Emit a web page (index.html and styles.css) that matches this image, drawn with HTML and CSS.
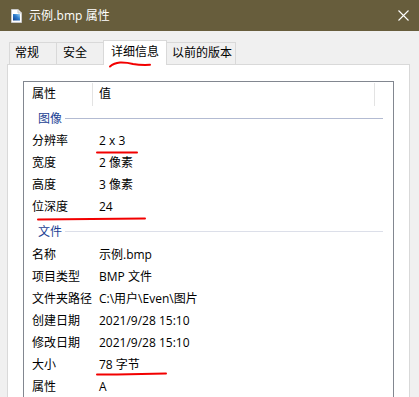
FILE: index.html
```html
<!DOCTYPE html>
<html lang="zh-CN">
<head>
<meta charset="utf-8">
<title>示例.bmp 属性</title>
<link rel="stylesheet" href="styles.css">
</head>
<body>
<div class="window">
  <div class="titlebar">
    <svg class="file-icon" width="11" height="14" viewBox="0 0 11 14">
      <defs>
        <linearGradient id="pic" x1="0" y1="1" x2="1" y2="0">
          <stop offset="0" stop-color="#123f8c"/>
          <stop offset="0.55" stop-color="#2f7fd0"/>
          <stop offset="1" stop-color="#9fd6f6"/>
        </linearGradient>
      </defs>
      <path d="M0.5 0.5 H7 L10.5 4 V13.5 H0.5 Z" fill="#ffffff" stroke="#c9c9c9"/>
      <path d="M7 0.5 V4 H10.5" fill="#eeeeee" stroke="#c9c9c9"/>
      <rect x="2" y="5" width="7" height="6.5" fill="url(#pic)"/>
    </svg>
    <span class="title">示例.bmp 属性</span>
    <svg class="close" width="11" height="11" viewBox="0 0 11 11">
      <path d="M0.5 0.5 L10.5 10.5 M10.5 0.5 L0.5 10.5" stroke="#ffffff" stroke-width="1.1" fill="none"/>
    </svg>
  </div>

  <div class="tabs">
    <div class="tab t-general">常规</div>
    <div class="tab t-security">安全</div>
    <div class="tab t-details active">详细信息</div>
    <div class="tab t-previous">以前的版本</div>
  </div>

  <div class="panel">
    <div class="list">
      <div class="header">
        <div class="hname">属性</div>
        <div class="sep"></div>
        <div class="hvalue">值</div>
        <div class="sep"></div>
      </div>

      <div class="group group-first"><span>图像</span><i class="rule rule-strong"></i></div>
      <div class="row"><div class="label">分辨率</div><div class="value">2 x 3</div></div>
      <div class="row"><div class="label">宽度</div><div class="value">2 像素</div></div>
      <div class="row"><div class="label">高度</div><div class="value">3 像素</div></div>
      <div class="row"><div class="label">位深度</div><div class="value">24</div></div>

      <div class="group group-next"><span>文件</span><i class="rule"></i></div>
      <div class="row"><div class="label">名称</div><div class="value">示例.bmp</div></div>
      <div class="row"><div class="label">项目类型</div><div class="value">BMP 文件</div></div>
      <div class="row"><div class="label">文件夹路径</div><div class="value">C:\用户\Even\图片</div></div>
      <div class="row"><div class="label">创建日期</div><div class="value">2021/9/28 15:10</div></div>
      <div class="row"><div class="label">修改日期</div><div class="value">2021/9/28 15:10</div></div>
      <div class="row"><div class="label">大小</div><div class="value">78 字节</div></div>
      <div class="row"><div class="label">属性</div><div class="value">A</div></div>
    </div>
  </div>

  <svg class="marks" width="419" height="397" viewBox="0 0 419 397">
    <g fill="none" stroke="#f20000" stroke-width="2" stroke-linecap="round" stroke-linejoin="round">
      <path d="M110 66.5 Q114 63 120 62.5 Q127 62.3 133 64 Q140 65.2 150 64.8"/>
      <path d="M97 152.5 L137 152.5"/>
      <path d="M38 219.5 L145 218.5"/>
      <path d="M97 374.5 L117 374.5 L166 373.5"/>
    </g>
  </svg>
</div>
</body>
</html>
```

FILE: styles.css
```css
* { box-sizing: border-box; }

html, body {
  margin: 0;
  padding: 0;
}

body {
  width: 419px;
  height: 397px;
  overflow: hidden;
  background: #f0f0f0;
  font-family: "Open Sans", "Noto Sans CJK SC", sans-serif;
  font-size: 12px;
  color: #000;
}

.window {
  position: relative;
  width: 419px;
  height: 397px;
  display: flex;
  flex-direction: column;
}

/* title bar */
.titlebar {
  height: 31px;
  flex: none;
  background: #675d3c;
  display: flex;
  align-items: center;
  padding: 0 10px 0 11px;
  color: #fff;
}

.file-icon {
  display: block;
  margin-right: 7px;
  margin-top: 1px;
}

.title {
  font-size: 12px;
  line-height: 16px;
  letter-spacing: 0.1px;
}

.close {
  display: block;
  margin-left: auto;
}

/* tabs */
.tabs {
  height: 33px;
  flex: none;
  display: flex;
  align-items: flex-end;
  padding-left: 9px;
}

.tab {
  height: 22px;
  line-height: 20px;
  border: 1px solid #d9d9d9;
  border-bottom: none;
  background: #f0f0f0;
  padding-left: 5px;
  white-space: nowrap;
  margin-left: -1px;
}

.t-general { width: 48px; margin-left: 0; }
.t-security { width: 48px; padding-left: 6px; }
.t-details { width: 64px; }
.t-previous { width: 70px; padding-left: 5px; }

.tab.active {
  position: relative;
  z-index: 1;
  height: 25px;
  margin-bottom: -1px;
  background: #fff;
  padding-left: 7px;
  line-height: 21px;
}

/* panel */
.panel {
  flex: 1;
  width: 403px;
  margin-left: 7px;
  background: #fff;
  border: 1px solid #d9d9d9;
  border-bottom: none;
  padding: 16px 0 0 15px;
  display: flex;
}

.list {
  width: 371px;
  border: 1px solid #828790;
  border-bottom: none;
  display: flex;
  flex-direction: column;
}

.header {
  height: 25px;
  flex: none;
  display: flex;
  align-items: flex-start;
}

.hname {
  width: 68px;
  padding-left: 8px;
  line-height: 24px;
}

.hvalue {
  width: 281px;
  padding-left: 6px;
  line-height: 24px;
}

.sep {
  width: 1px;
  height: 23px;
  margin-top: 1px;
  background: #e3e3e3;
}

.group {
  flex: none;
  display: flex;
  align-items: center;
  padding-left: 14px;
  padding-right: 10px;
  color: #1c3f94;
}

.group-first { height: 23px; }
.group-next { height: 26px; padding-top: 2px; }

.group span {
  line-height: 20px;
}

.rule {
  flex: 1;
  height: 1px;
  margin-left: 3px;
  margin-top: -1px;
  background: #dcdfe9;
}

.rule-strong {
  background: #b3bbd2;
}

.row {
  height: 22px;
  flex: none;
  display: flex;
  align-items: center;
  line-height: 22px;
  white-space: nowrap;
}

.label {
  width: 69px;
  padding-left: 8px;
}

.value {
  padding-left: 6px;
}

/* hand-drawn annotations over the screenshot */
.marks {
  position: absolute;
  left: 0;
  top: 0;
  pointer-events: none;
  z-index: 5;
}
```
